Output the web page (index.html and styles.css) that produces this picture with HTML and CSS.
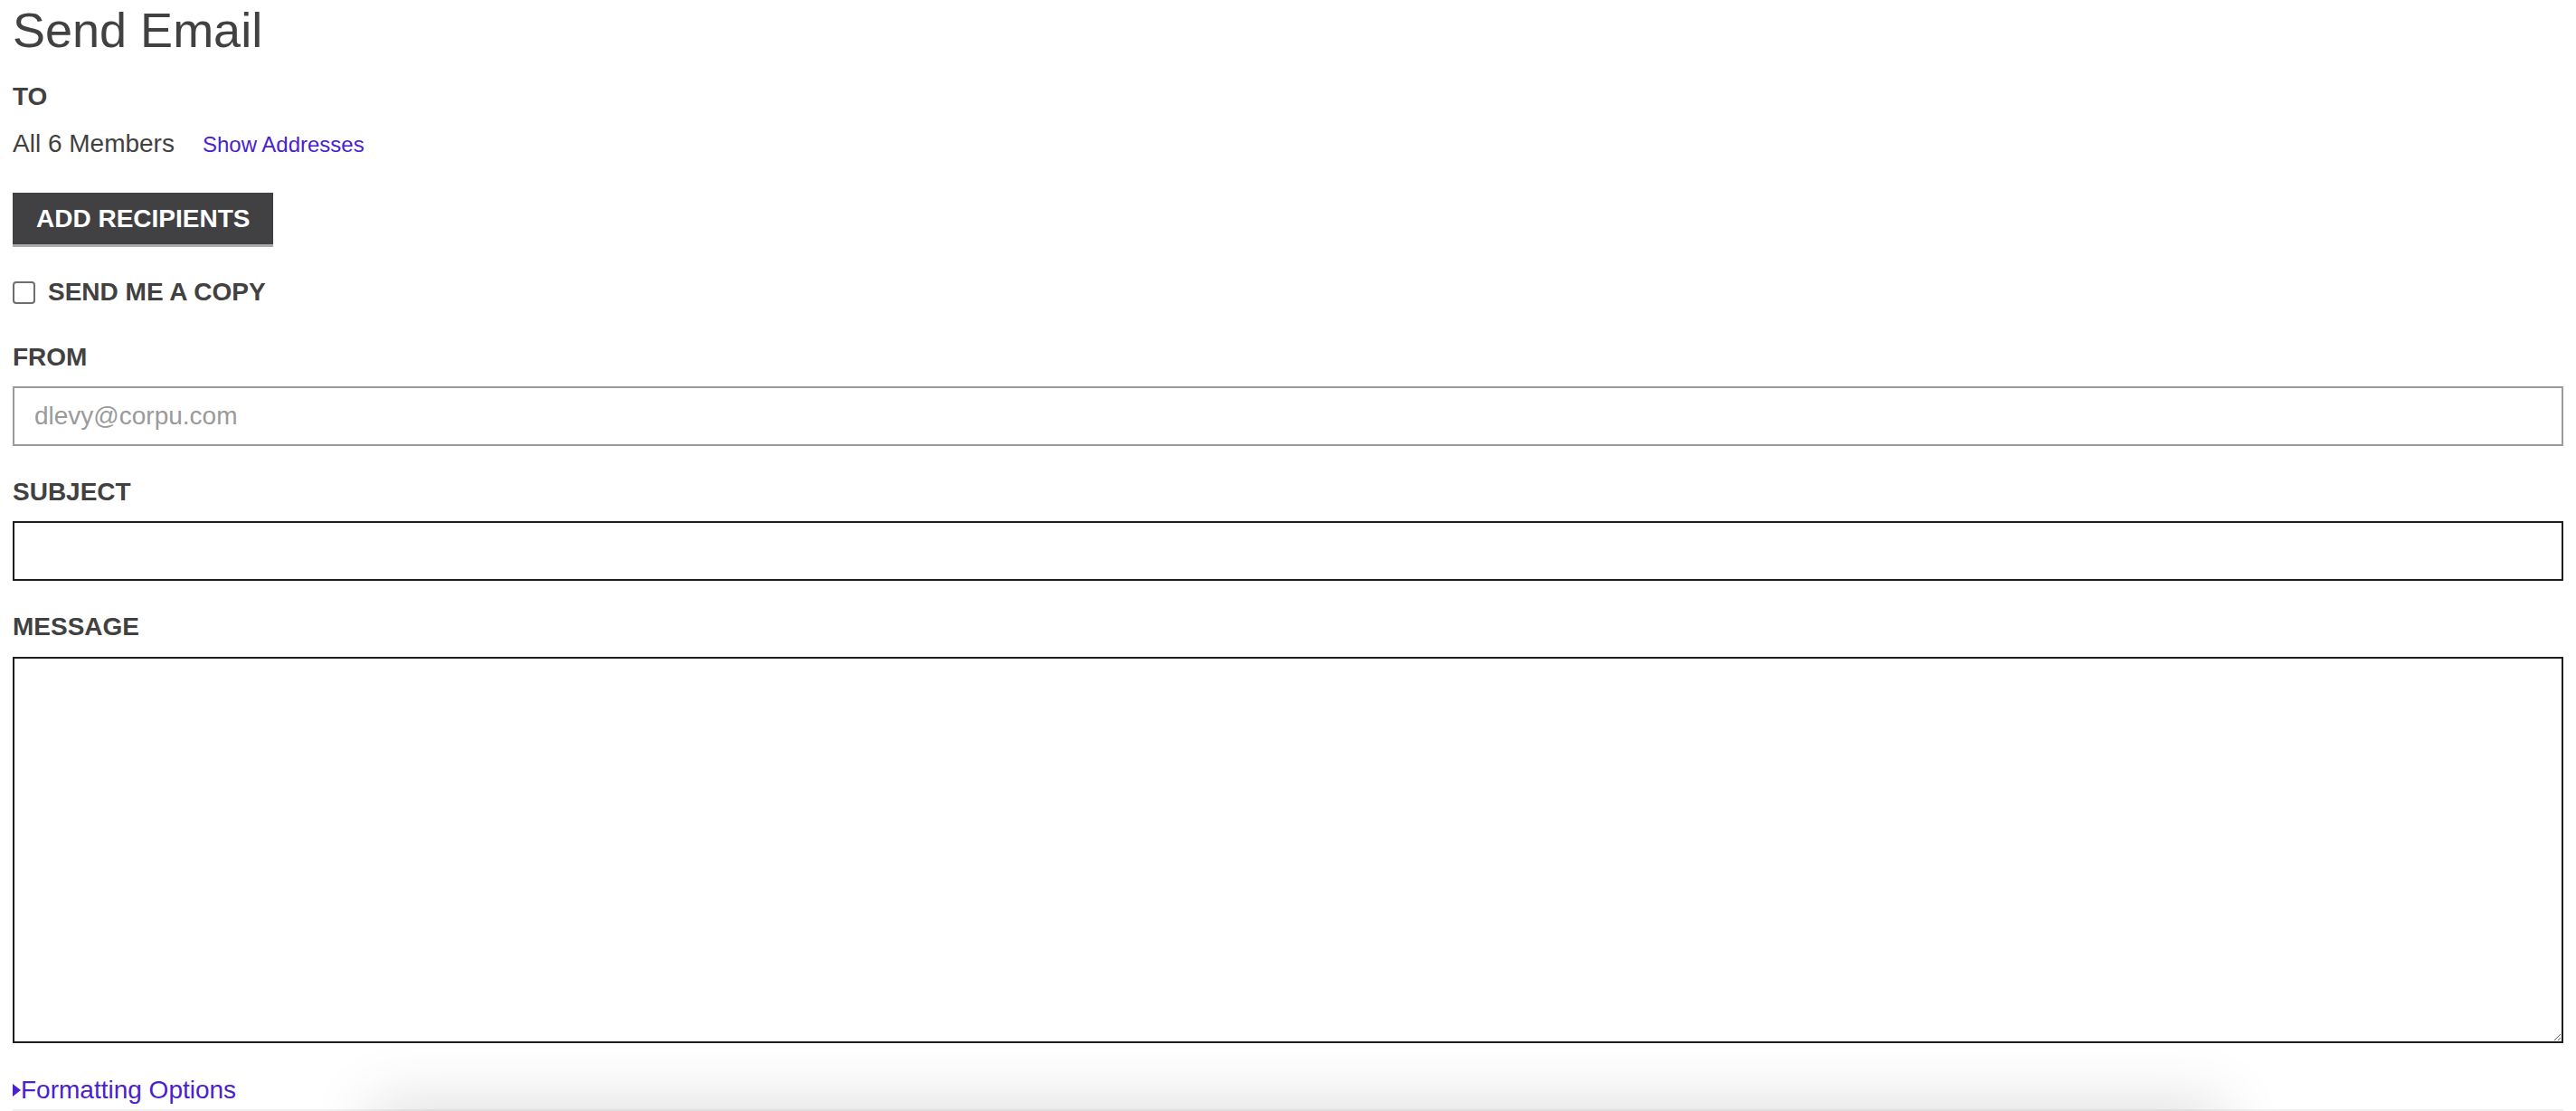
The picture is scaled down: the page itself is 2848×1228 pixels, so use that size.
FILE: index.html
```html
<!DOCTYPE html>
<html lang="en">
<head>
<meta charset="utf-8">
<title>Send Email</title>
<link rel="stylesheet" href="styles.css">
</head>
<body>
<main class="page">
  <h1 class="title">Send Email</h1>

  <div class="label label-to">TO</div>
  <div class="to-row">
    <span class="members">All 6 Members</span>
    <a class="link show-link" href="#">Show Addresses</a>
  </div>

  <button class="btn-add" type="button">ADD RECIPIENTS</button>

  <label class="copy-row">
    <input class="check" type="checkbox">
    <span class="copy-text">SEND ME A COPY</span>
  </label>

  <div class="label label-from">FROM</div>
  <input class="field field-from" type="text" placeholder="dlevy@corpu.com">

  <div class="label label-gap">SUBJECT</div>
  <input class="field field-dark" type="text">

  <div class="label label-gap">MESSAGE</div>
  <textarea class="field field-dark message"></textarea>

  <a class="link format-link" href="#"><span class="tri"></span>Formatting Options</a>
  <div class="bottom-rule"></div>
</main>
<div class="footer-shadow"></div>
</body>
</html>
```

FILE: styles.css
```css
html, body {
  margin: 0;
  padding: 0;
  background: #ffffff;
  overflow: hidden;
}

body {
  font-family: "Liberation Sans", Arial, sans-serif;
  color: #414141;
}

.page {
  padding: 0 14px;
}

.title {
  margin: 2px 0 0 0;
  font-size: 54px;
  line-height: 62px;
  font-weight: 400;
  color: #414141;
}

.label {
  font-size: 28px;
  line-height: 32px;
  font-weight: 700;
  color: #414141;
}

.label-to {
  margin-top: 27px;
}

.to-row {
  margin-top: 20px;
  display: flex;
  align-items: baseline;
  font-size: 28px;
  line-height: 32px;
}

.members {
  color: #414141;
}

.link {
  color: #4a21cf;
  text-decoration: none;
}

.show-link {
  margin-left: 31px;
  font-size: 24px;
}

.btn-add {
  display: block;
  margin-top: 37px;
  padding: 13px 26px 12px;
  border: 0;
  border-bottom: 3px solid #ababab;
  border-radius: 0;
  background: #414143;
  color: #ffffff;
  font-family: "Liberation Sans", Arial, sans-serif;
  font-size: 28px;
  line-height: 32px;
  font-weight: 700;
  cursor: pointer;
}

.copy-row {
  margin-top: 34px;
  display: flex;
  align-items: center;
  gap: 14px;
  height: 32px;
}

.check {
  appearance: none;
  -webkit-appearance: none;
  margin: 0;
  width: 25px;
  height: 25px;
  box-sizing: border-box;
  border: 2px solid #6e6e6e;
  border-radius: 4px;
  background: #ffffff;
}

.copy-text {
  font-size: 28px;
  line-height: 32px;
  font-weight: 700;
  color: #414141;
}

.label-from {
  margin-top: 40px;
}

.label-gap {
  margin-top: 35px;
}

.field {
  display: block;
  box-sizing: border-box;
  width: 100%;
  margin: 16px 0 0 0;
  height: 66px;
  padding: 0 22px;
  border: 2px solid #9b9b9b;
  border-radius: 0;
  background: #ffffff;
  font-family: "Liberation Sans", Arial, sans-serif;
  font-size: 28px;
  color: #414141;
  outline: none;
}

.field::placeholder {
  color: #9a9a9a;
}

.field-dark {
  border-color: #1e1e1e;
}

.message {
  height: 427px;
  padding: 16px 22px;
  resize: vertical;
  margin-top: 17px;
}

.format-link {
  display: flex;
  align-items: center;
  margin-top: 36px;
  font-size: 28px;
  line-height: 32px;
}

.tri {
  display: inline-block;
  width: 0;
  height: 0;
  margin-right: 0;
  border-top: 7.5px solid transparent;
  border-bottom: 7.5px solid transparent;
  border-left: 9px solid #4a21cf;
}

.bottom-rule {
  margin-top: 5px;
  border-top: 3px solid #f1f1f1;
}

.footer-shadow {
  position: fixed;
  left: 420px;
  right: 400px;
  bottom: -70px;
  height: 70px;
  background: #e9e9e9;
  box-shadow: 0 0 70px 10px rgba(0, 0, 0, 0.13);
}
```
